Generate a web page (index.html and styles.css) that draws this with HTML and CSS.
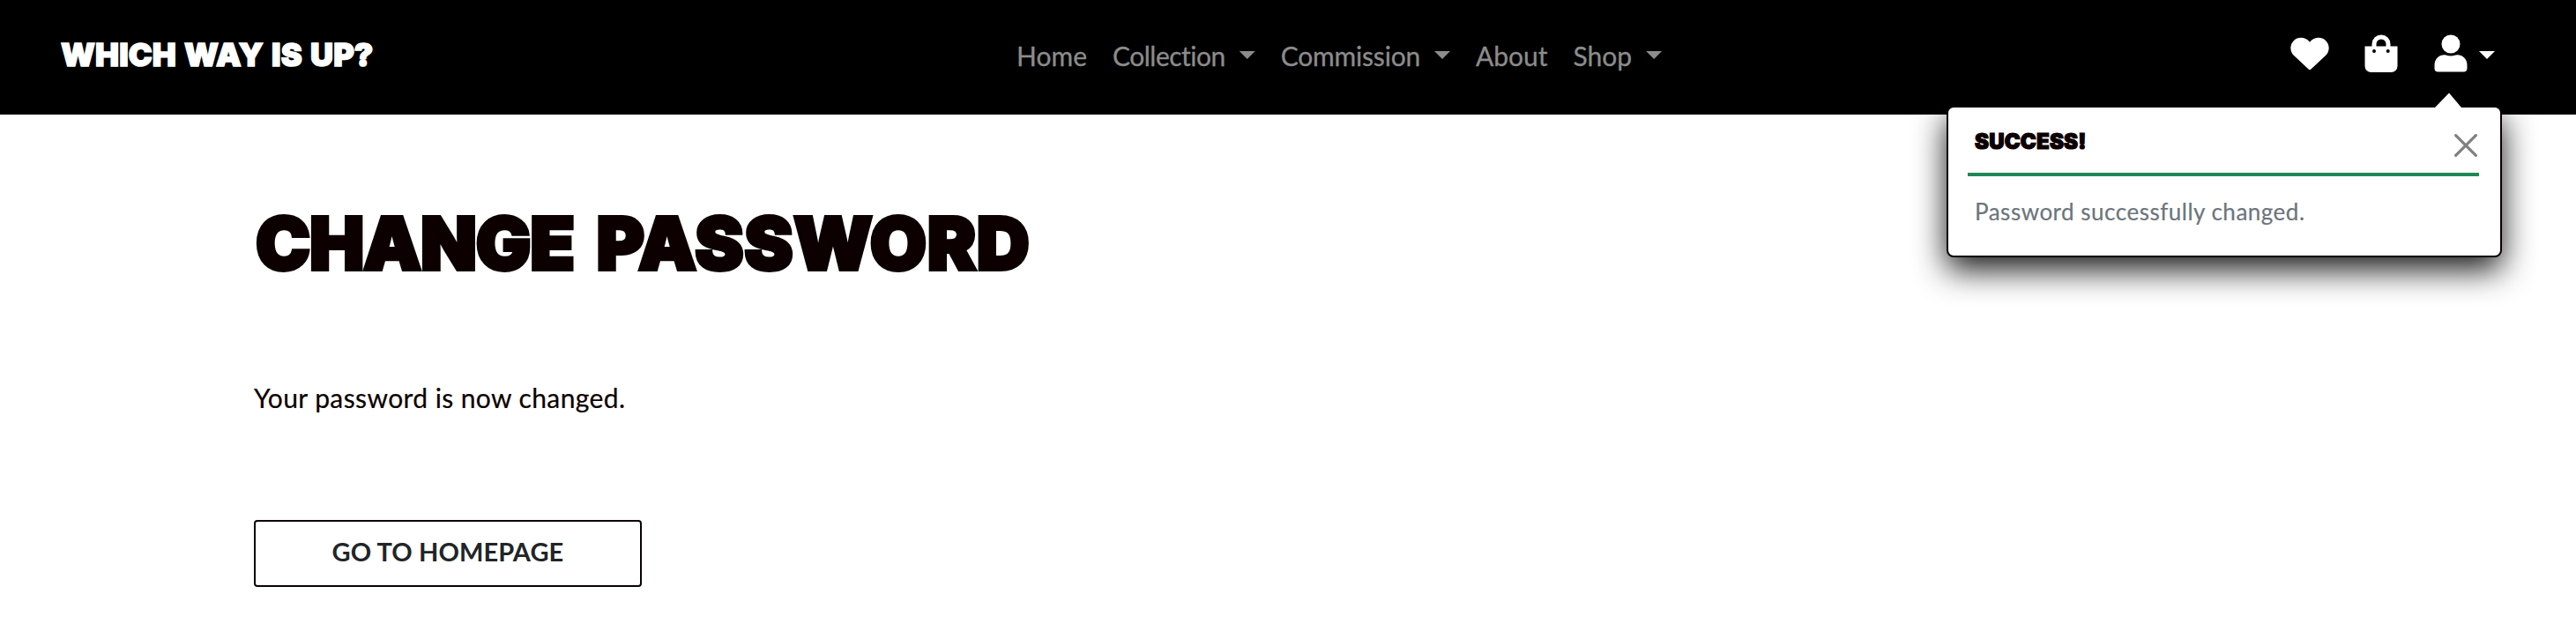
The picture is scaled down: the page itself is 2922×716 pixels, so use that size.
FILE: index.html
```html
<!DOCTYPE html>
<html lang="en">
<head>
<meta charset="utf-8">
<title>Change Password</title>
<link rel="stylesheet" href="styles.css">
</head>
<body>
<header class="navbar">
  <a class="brand display">WHICH WAY IS UP?</a>
  <nav class="links">
    <a class="link home">Home</a>
    <a class="link collection">Collection<span class="caret"></span></a>
    <a class="link commission">Commission<span class="caret"></span></a>
    <a class="link about">About</a>
    <a class="link shop">Shop<span class="caret"></span></a>
  </nav>
  <div class="tools">
    <svg class="heart" width="44" height="38" viewBox="0 0 44 38"><path d="M22 5.8C17.4-.4 8.800-.9 4 3.900c-5 5-4.800 12.400 0 17.200L20.600 36.600q1.400 1.300 2.800 0L40 21.100c4.800-4.800 5-12.200 0-17.200C35.200-.9 26.600-.4 22 5.800Z"/></svg>
    <svg class="bag" width="38" height="44" viewBox="0 0 38 44"><path fill-rule="evenodd" d="M8.500 13.500V11a10.500 10.500 0 0 1 21 0v2.500H37.500V36a7 7 0 0 1-7 7h-23a7 7 0 0 1-7-7V13.500ZM13.500 13.500h11V11a5.500 5.500 0 0 0-11 0ZM11 17a2 2 0 1 0 0 4 2 2 0 0 0 0-4Zm15.700 0a2 2 0 1 0 0 4 2 2 0 0 0 0-4Z"/></svg>
    <svg class="user" width="38" height="44" viewBox="0 0 38 44"><circle cx="19" cy="11" r="10.500"/><path d="M.5 38.500V34.500A11.300 11.300 0 0 1 11.800 23.200c2.700 0 3.900 1.300 7.200 1.300s4.500-1.300 7.200-1.300A11.300 11.300 0 0 1 37.500 34.500V38.500a4 4 0 0 1-4 4h-29a4 4 0 0 1-4-4Z"/></svg>
    <span class="caret"></span>
  </div>
  <section class="toast">
    <svg class="arrow" width="30" height="17" viewBox="0 0 30 17"><path d="M0 17 16 0.500 30 17Z"/></svg>
    <div class="toast-head">
      <strong class="toast-title display">SUCCESS!</strong>
      <svg class="close" width="26" height="26" viewBox="0 0 26 26"><path d="M1.600 1.600 24.400 24.400M24.400 1.600 1.600 24.400"/></svg>
    </div>
    <p class="toast-body">Password successfully changed.</p>
  </section>
</header>
<main class="page">
  <h1 class="title display"><span class="tight">CHANGE</span> <span class="loose">PASSWORD</span></h1>
  <p class="message">Your password is now changed.</p>
  <a class="button">GO TO HOMEPAGE</a>
</main>
</body>
</html>
```
FILE: styles.css
```css
* { box-sizing: border-box; }
body { margin: 0; background: #fff; color: #0c0000; font-family: Lato, "Open Sans", sans-serif; font-size: 30px; line-height: 44px; white-space: nowrap; font-variant-ligatures: none; }
h1, p { margin: 0; }
svg { display: block; flex: none; }
.display { font-family: Inter, sans-serif; font-weight: 900; paint-order: stroke fill; stroke-linejoin: round; }
.navbar { position: relative; height: 130px; background: #000; display: grid; grid-template-columns: 1084px 1fr 324px; align-items: start; padding-left: 69px; }
.brand { color: #fff; font-size: 36px; line-height: 44px; margin-top: 40px; letter-spacing: 0.1px; word-spacing: 2px; -webkit-text-stroke: 1.5px #fff; }
.links { display: flex; gap: 29px; margin-top: 41px; color: #8c8c8c; -webkit-text-stroke: 0.3px #8c8c8c; }
.collection { letter-spacing: -0.5px; }
.commission { letter-spacing: -0.2px; }
.link { display: flex; }
.caret { width: 18px; height: 9px; margin: 17px 0 0 16px; background: currentColor; clip-path: polygon(0 0, 100% 0, 50% 100%); }
.tools { display: flex; color: #fff; fill: #fff; padding-top: 39px; }
.heart { margin-top: 3px; }
.bag { margin-left: 40px; }
.user { margin-left: 41px; }
.tools .caret { margin: 19px 0 0 13px; }
.toast { position: absolute; left: 2208px; top: 120px; width: 630px; height: 172px; background: #fff; border: 2px solid #0c0000; border-radius: 8px; padding: 0 24px 0 22px; box-shadow: 0 14px 36px rgba(0,0,0,.9); }
.arrow { position: absolute; left: 552px; top: -17px; fill: #fff; }
.toast-head { height: 78px; border-bottom: 4px solid #1e8856; display: flex; justify-content: space-between; padding: 17px 2px 0 8px; }
.toast-title { font-size: 24px; letter-spacing: 0.2px; -webkit-text-stroke: 1.2px #0c0000; }
.close { margin-top: 13px; fill: none; stroke: #808080; stroke-width: 3.2; stroke-linecap: round; }
.toast-body { font-size: 26px; letter-spacing: 0.5px; color: #6c757d; -webkit-text-stroke: 0.2px #6c757d; padding: 18px 0 0 8px; }
.page { padding: 96px 288px 0; display: flex; flex-direction: column; align-items: flex-start; }
.title { font-size: 83px; line-height: 100px; word-spacing: 9px; -webkit-text-stroke: 4px #0c0000; margin-left: 2px; }
.tight { letter-spacing: -1.1px; }
.loose { letter-spacing: 0.6px; }
.message { margin-top: 103px; letter-spacing: 0.4px; -webkit-text-stroke: 0.2px #0c0000; }
.button { width: 440px; height: 76px; margin-top: 117px; border: 2px solid #0c0000; border-radius: 4px; color: #212529; font-size: 29px; font-weight: 700; text-align: center; line-height: 67px; letter-spacing: 0.1px; }
```
